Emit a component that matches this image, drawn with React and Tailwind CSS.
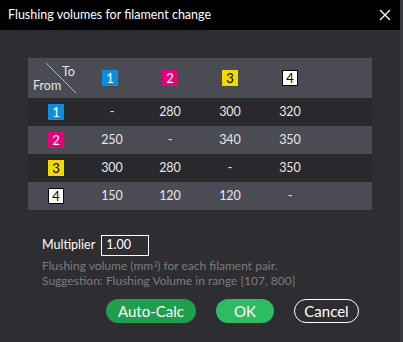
const cols = [
  { n: "1", cls: "bg-[#0a8fdc] text-white" },
  { n: "2", cls: "bg-[#e6007e] text-white" },
  { n: "3", cls: "bg-[#f2d900] text-black" },
  { n: "4", cls: "bg-white text-black border border-black" },
];

const rows = [
  ["-", "280", "300", "320"],
  ["250", "-", "340", "350"],
  ["300", "280", "-", "350"],
  ["150", "120", "120", "-"],
];

function Badge({ c }) {
  return (
    <span className={`inline-flex items-center justify-center w-[16px] h-[16px] text-[13px] leading-none ${c.cls}`}>
      {c.n}
    </span>
  );
}

export default function App() {
  return (
    <div className="w-[403px] h-[342px] flex bg-[#2e2e32] font-['Lato',sans-serif] text-[#e6e6e6] overflow-hidden">
      <div className="flex-1 flex flex-col">
        <div className="h-[30px] bg-black flex items-center justify-between pl-[8px] pr-[9px]">
          <span className="text-[12.5px] text-white">Flushing volumes for filament change</span>
          <svg width="12" height="12" viewBox="0 0 12 12" className="text-white">
            <path d="M1 1 L11 11 M11 1 L1 11" stroke="currentColor" strokeWidth="1.3" />
          </svg>
        </div>

        <div className="flex-1 flex flex-col pt-[28px] pl-[28px]">
          <div className="w-[344px] flex flex-col text-[12.5px]">
            <div className="h-[40px] bg-[#4b4b53] flex items-center">
              <div className="relative w-[52px] h-[40px]">
                <svg className="absolute left-0 top-0" width="52" height="40" viewBox="0 0 52 40">
                  <line x1="18" y1="5" x2="48" y2="35" stroke="#d8d8d8" strokeWidth="0.8" />
                </svg>
                <span className="absolute left-[34px] top-[8px] leading-none">To</span>
                <span className="absolute left-[5px] top-[22px] leading-none">From</span>
              </div>
              {cols.map((c) => (
                <div key={c.n} className="w-[60px] flex justify-center">
                  <Badge c={c} />
                </div>
              ))}
            </div>
            {rows.map((r, i) => (
              <div
                key={i}
                className={`h-[28px] flex items-center ${i % 2 === 0 ? "bg-[#29292d]" : "bg-[#4b4b53]"}`}
              >
                <div className="w-[56px] flex justify-center">
                  <Badge c={cols[i]} />
                </div>
                <div className="w-[56px] flex justify-center">{r[0]}</div>
                {r.slice(1).map((v, j) => (
                  <div key={j} className="w-[60px] flex justify-center">{v}</div>
                ))}
              </div>
            ))}
          </div>

          <div className="mt-[25px] pl-[14px] flex items-center gap-[6px]">
            <span className="text-[12.5px] text-white">Multiplier</span>
            <div className="w-[48px] h-[21px] border border-white flex items-center pl-[4px] text-[12.5px] text-white">
              1.00
            </div>
          </div>
          <div className="pl-[14px] mt-[2px] text-[12px] leading-[15px] text-[#7b7b80]">
            <div>
              Flushing volume (mm<sup className="text-[7px] leading-none">3</sup>) for each filament pair.
            </div>
            <div>Suggestion: Flushing Volume in range [107, 800]</div>
          </div>

          <div className="mt-[11px] flex items-center pl-[78px] gap-[20px] text-[15px] text-white">
            <button className="w-[90px] h-[24px] rounded-full bg-[#1f9e4c] flex items-center justify-center">
              Auto-Calc
            </button>
            <button className="w-[58px] h-[24px] rounded-full bg-[#2dbb64] flex items-center justify-center">
              OK
            </button>
            <button className="w-[65px] h-[24px] rounded-full border border-white flex items-center justify-center">
              Cancel
            </button>
          </div>
        </div>
      </div>
      <div className="w-[3px] bg-[#3a3a3e]" />
    </div>
  );
}
